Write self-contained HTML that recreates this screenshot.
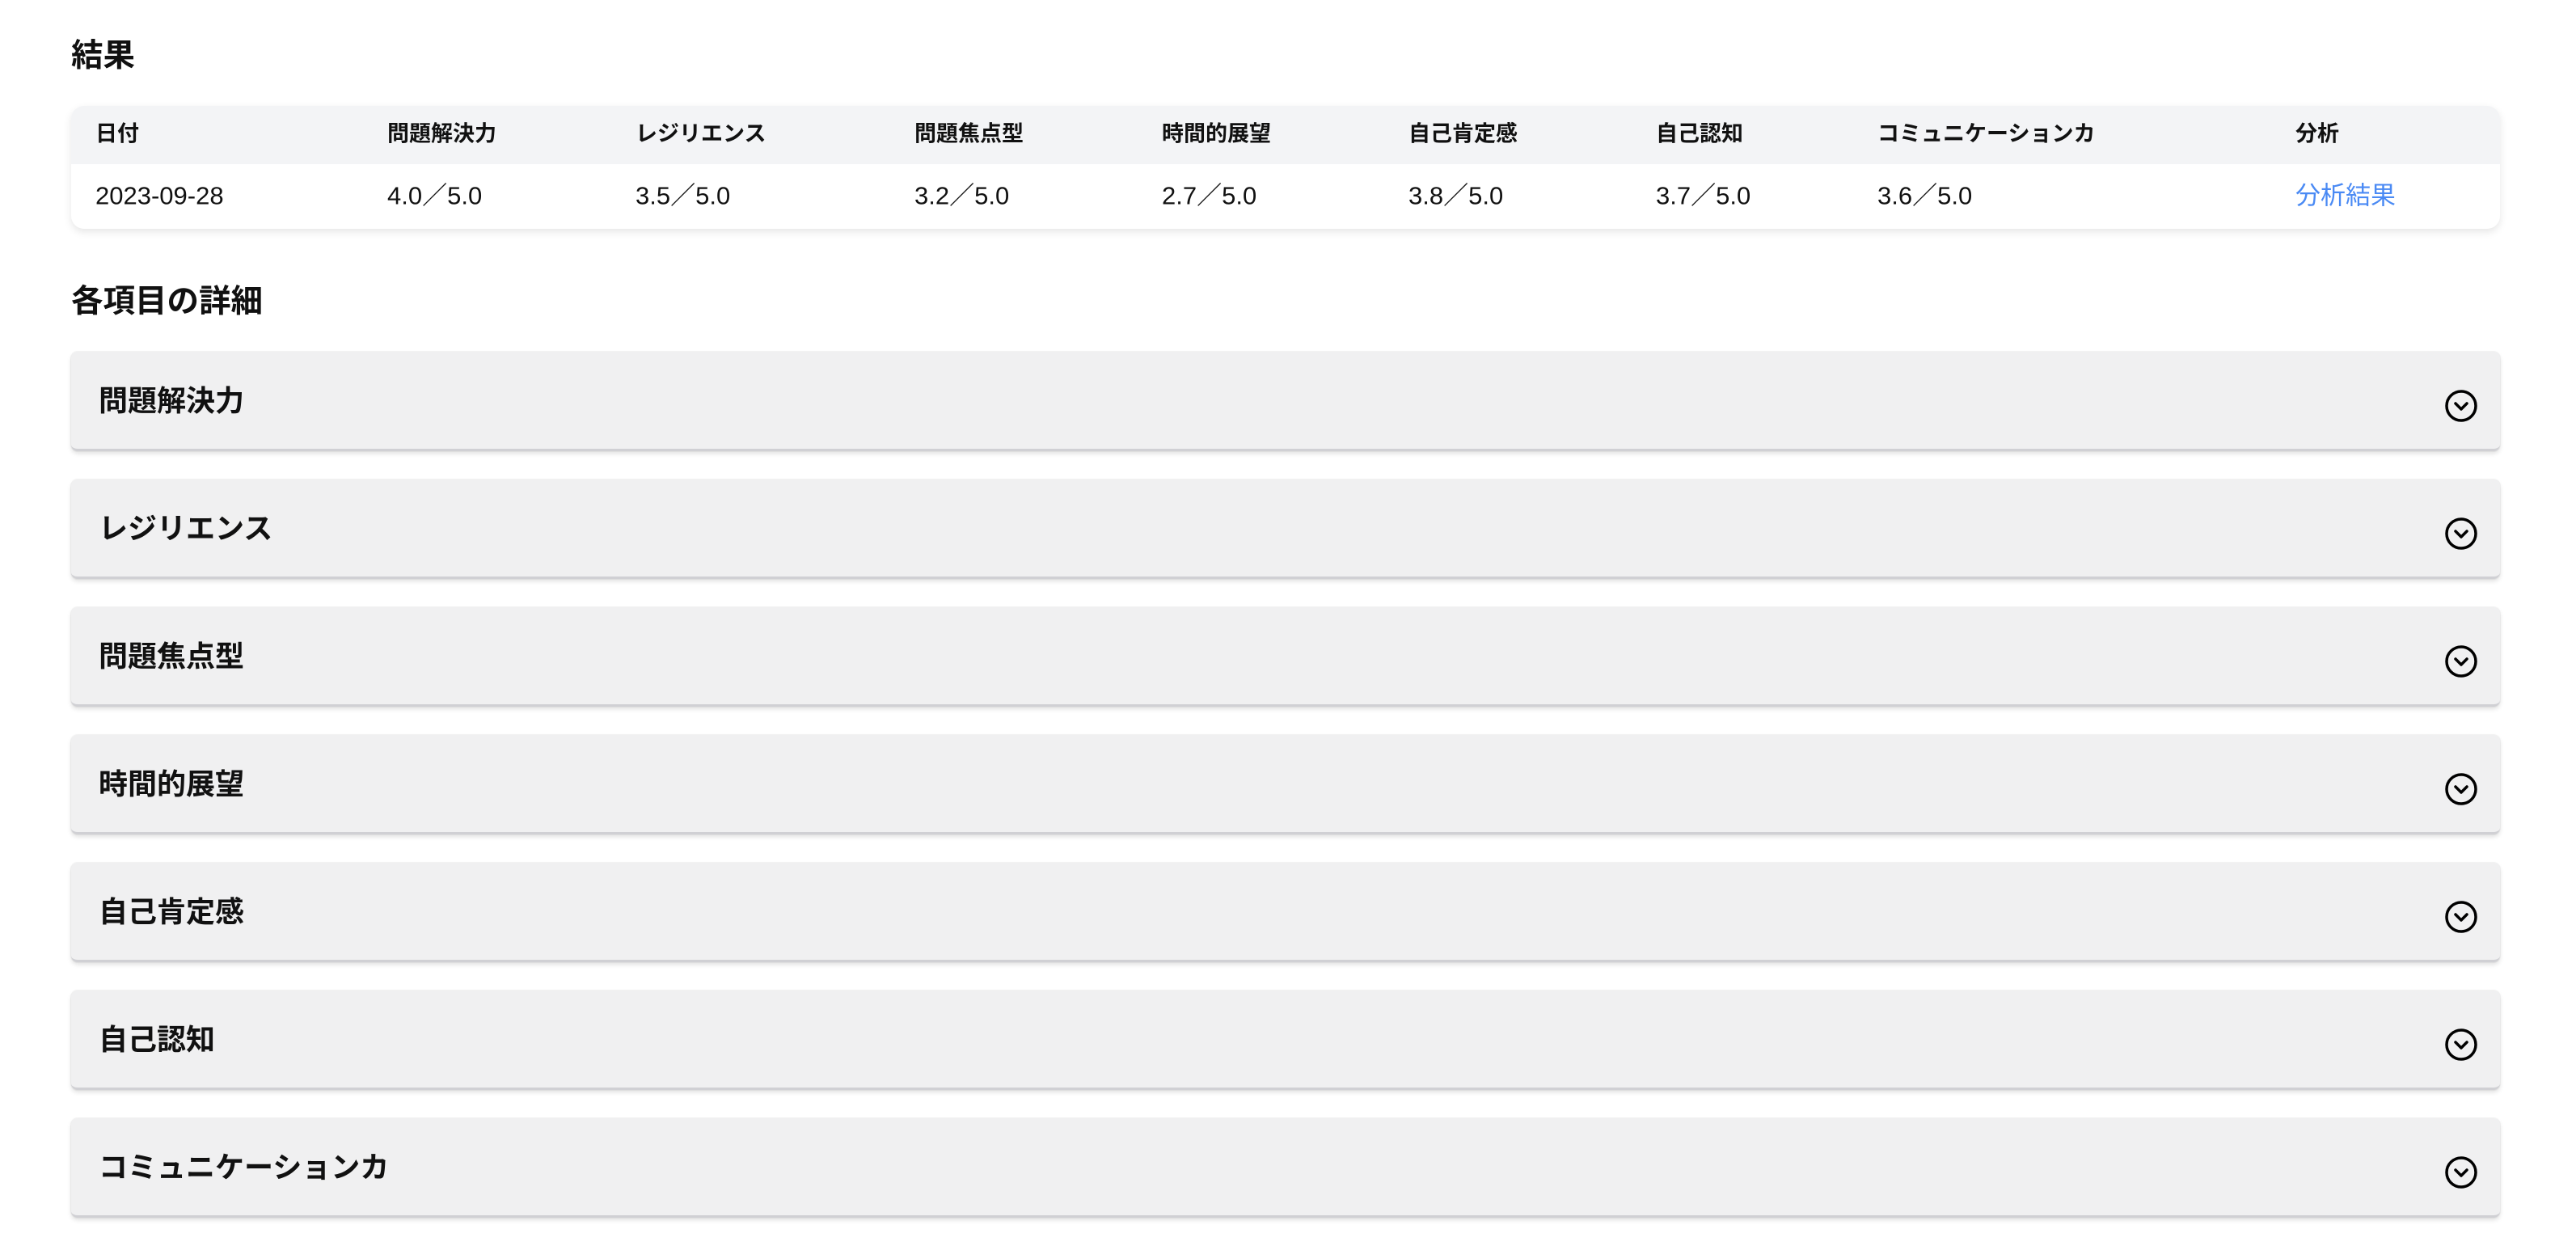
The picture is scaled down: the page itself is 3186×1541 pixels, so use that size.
<!DOCTYPE html>
<html><head><meta charset="utf-8"><style>
*{margin:0;padding:0;box-sizing:border-box}
body{width:3186px;height:1541px;background:#fff;font-family:"Liberation Sans","Noto Sans CJK JP",sans-serif;color:#111;position:relative;overflow:hidden}
.h{position:absolute;left:88px;font-size:39.5px;font-weight:bold;line-height:1}
.card{position:absolute;left:88px;top:131px;width:3004px;height:152px;border-radius:16px;background:#fff;box-shadow:0 4px 10px rgba(0,0,0,0.1);overflow:hidden}
.hd{position:absolute;left:0;top:0;width:100%;height:72px;background:#f3f4f6}
.c{position:absolute;white-space:nowrap;line-height:1;transform:translateY(-50%)}
.th{font-size:27px;font-weight:bold;top:35px}
.td{font-size:31px;top:111px}
.acc{position:absolute;left:88px;width:3004px;height:123px;background:#f0f0f1;border-radius:8px;box-shadow:0 3px 6px rgba(0,0,0,0.12),0 0 0 1px rgba(0,0,0,0.04);border-bottom:3px solid #d0d0d4}
.acc span{position:absolute;left:34px;top:61px;transform:translateY(-50%);font-size:36px;font-weight:bold;line-height:1}
.acc svg{position:absolute;left:2935px;top:46px}
</style></head><body>
<div class="h" style="top:50px">結果</div>
<div class="card"><div class="hd"></div>
<div class="c th" style="left:30px">日付</div>
<div class="c th" style="left:391px">問題解決力</div>
<div class="c th" style="left:698px">レジリエンス</div>
<div class="c th" style="left:1043px">問題焦点型</div>
<div class="c th" style="left:1349px">時間的展望</div>
<div class="c th" style="left:1654px">自己肯定感</div>
<div class="c th" style="left:1960px">自己認知</div>
<div class="c th" style="left:2234px">コミュニケーションカ</div>
<div class="c th" style="left:2751px">分析</div>
<div class="c td" style="left:30px">2023-09-28</div>
<div class="c td" style="left:391px">4.0／5.0</div>
<div class="c td" style="left:698px">3.5／5.0</div>
<div class="c td" style="left:1043px">3.2／5.0</div>
<div class="c td" style="left:1349px">2.7／5.0</div>
<div class="c td" style="left:1654px">3.8／5.0</div>
<div class="c td" style="left:1960px">3.7／5.0</div>
<div class="c td" style="left:2234px">3.6／5.0</div>
<div class="c td" style="left:2751px;color:#4a8af4">分析結果</div>
</div>
<div class="h" style="top:354px">各項目の詳細</div>
<div class="acc" style="top:435px"><span>問題解決力</span><svg width="42" height="42" viewBox="0 0 42 42"><circle cx="21" cy="21" r="18" fill="none" stroke="#000" stroke-width="3.5"/><path d="M14 18l7 7 7-7" fill="none" stroke="#000" stroke-width="3.5" stroke-linecap="round" stroke-linejoin="round"/></svg></div>
<div class="acc" style="top:593px"><span>レジリエンス</span><svg width="42" height="42" viewBox="0 0 42 42"><circle cx="21" cy="21" r="18" fill="none" stroke="#000" stroke-width="3.5"/><path d="M14 18l7 7 7-7" fill="none" stroke="#000" stroke-width="3.5" stroke-linecap="round" stroke-linejoin="round"/></svg></div>
<div class="acc" style="top:751px"><span>問題焦点型</span><svg width="42" height="42" viewBox="0 0 42 42"><circle cx="21" cy="21" r="18" fill="none" stroke="#000" stroke-width="3.5"/><path d="M14 18l7 7 7-7" fill="none" stroke="#000" stroke-width="3.5" stroke-linecap="round" stroke-linejoin="round"/></svg></div>
<div class="acc" style="top:909px"><span>時間的展望</span><svg width="42" height="42" viewBox="0 0 42 42"><circle cx="21" cy="21" r="18" fill="none" stroke="#000" stroke-width="3.5"/><path d="M14 18l7 7 7-7" fill="none" stroke="#000" stroke-width="3.5" stroke-linecap="round" stroke-linejoin="round"/></svg></div>
<div class="acc" style="top:1067px"><span>自己肯定感</span><svg width="42" height="42" viewBox="0 0 42 42"><circle cx="21" cy="21" r="18" fill="none" stroke="#000" stroke-width="3.5"/><path d="M14 18l7 7 7-7" fill="none" stroke="#000" stroke-width="3.5" stroke-linecap="round" stroke-linejoin="round"/></svg></div>
<div class="acc" style="top:1225px"><span>自己認知</span><svg width="42" height="42" viewBox="0 0 42 42"><circle cx="21" cy="21" r="18" fill="none" stroke="#000" stroke-width="3.5"/><path d="M14 18l7 7 7-7" fill="none" stroke="#000" stroke-width="3.5" stroke-linecap="round" stroke-linejoin="round"/></svg></div>
<div class="acc" style="top:1383px"><span>コミュニケーションカ</span><svg width="42" height="42" viewBox="0 0 42 42"><circle cx="21" cy="21" r="18" fill="none" stroke="#000" stroke-width="3.5"/><path d="M14 18l7 7 7-7" fill="none" stroke="#000" stroke-width="3.5" stroke-linecap="round" stroke-linejoin="round"/></svg></div>
</body></html>
